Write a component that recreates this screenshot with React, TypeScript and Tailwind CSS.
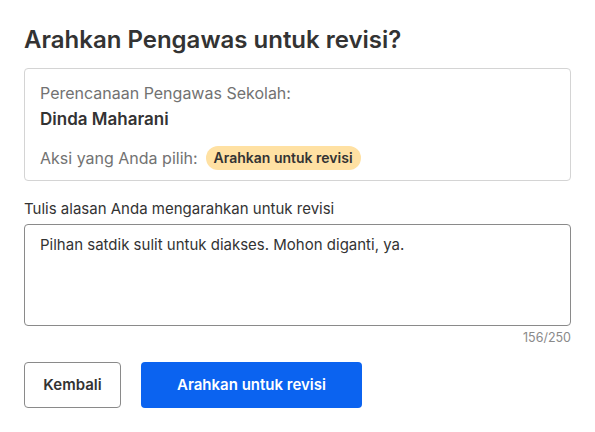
export default function App() {
  return (
    <div className="min-h-screen bg-white px-6 pt-6 font-['Inter',sans-serif] text-[#333333]">
      <h1 className="text-2xl leading-8 font-semibold text-[#333333]">
        Arahkan Pengawas untuk revisi?
      </h1>

      <div className="mt-3 rounded border border-[#d4d4d4] px-[15px] pt-3 pb-[10px]">
        <p className="text-base leading-6 text-[#727272]">Perencanaan Pengawas Sekolah:</p>
        <p className="mt-0.5 text-[17px] leading-6 font-semibold text-[#333333]">Dinda Maharani</p>
        <div className="mt-[15px] flex h-6 items-center gap-2">
          <span className="text-base leading-6 text-[#727272]">Aksi yang Anda pilih:</span>
          <span className="rounded-full bg-[#ffe1a3] px-2 text-sm leading-6 font-semibold text-[#333333]">
            Arahkan untuk revisi
          </span>
        </div>
      </div>

      <label className="mt-[18px] block text-[15px] leading-5 text-[#333333]">
        Tulis alasan Anda mengarahkan untuk revisi
      </label>
      <div className="mt-[5px] h-[102px] rounded border border-[#8a8a8a] px-[15px] pt-[10px] text-[15px] leading-5 text-[#333333]">
        Pilhan satdik sulit untuk diakses. Mohon diganti, ya.
      </div>
      <p className="mt-1 text-right text-[12.5px] leading-4 text-[#8a8a8a]">156/250</p>

      <div className="mt-4 flex gap-5">
        <button className="h-[46px] w-[97px] rounded border border-[#8a8a8a] bg-white text-[15px] font-semibold text-[#333333]">
          Kembali
        </button>
        <button className="h-[46px] w-[221px] rounded bg-[#0b63f0] text-[15px] font-semibold text-white">
          Arahkan untuk revisi
        </button>
      </div>
    </div>
  )
}
